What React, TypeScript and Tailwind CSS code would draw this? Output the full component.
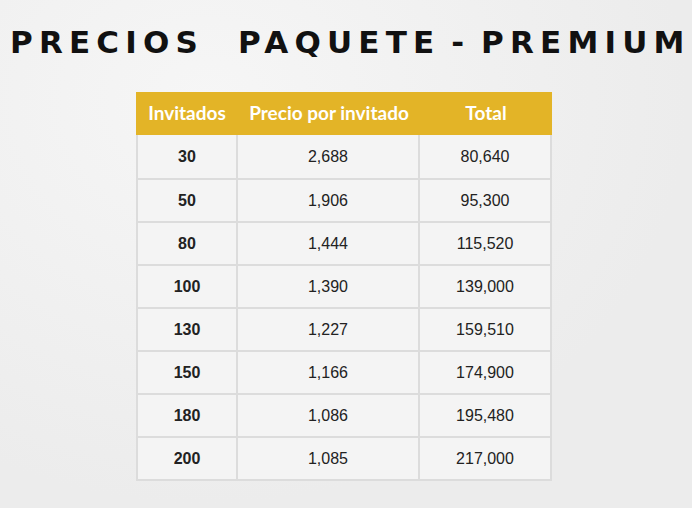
const rows = [
  ["30", "2,688", "80,640"],
  ["50", "1,906", "95,300"],
  ["80", "1,444", "115,520"],
  ["100", "1,390", "139,000"],
  ["130", "1,227", "159,510"],
  ["150", "1,166", "174,900"],
  ["180", "1,086", "195,480"],
  ["200", "1,085", "217,000"],
];

export default function App() {
  return (
    <div className="h-[508px] w-[692px] overflow-hidden bg-[#efefef] bg-[radial-gradient(ellipse_at_30%_20%,#f6f6f6,#ececec_70%)]">
      <h1 className="whitespace-nowrap pl-[10px] pt-[22px] font-['DejaVu_Sans',sans-serif] text-[31px] font-bold leading-[40px] tracking-[0.2em] text-[#111]">
        PRECIOS&nbsp; PAQUETE<span className="tracking-normal"> </span>-<span className="tracking-normal"> </span>PREMIUM
      </h1>
      <div className="ml-[136px] mt-[30px] w-[416px]">
        <div className="grid h-[43px] grid-cols-[102px_182px_132px] items-center bg-[#e3b427] font-['Lato','Open_Sans',sans-serif] text-[19px] font-bold text-white">
          <div className="text-center">Invitados</div>
          <div className="text-center">Precio por invitado</div>
          <div className="text-center">Total</div>
        </div>
        <div className="border-x-2 border-b-2 border-[#dcdcdc] bg-[#f4f4f4] font-['Liberation_Sans',Arial,sans-serif] text-[16px] text-[#222]">
          {rows.map((r, i) => (
            <div
              key={r[0]}
              className={`grid h-[43px] grid-cols-[100px_182px_130px] items-center ${i > 0 ? "border-t-2 border-[#dcdcdc]" : ""}`}
            >
              <div className="flex h-full items-center justify-center border-r-2 border-[#dcdcdc] font-bold">{r[0]}</div>
              <div className="flex h-full items-center justify-center border-r-2 border-[#dcdcdc]">{r[1]}</div>
              <div className="text-center">{r[2]}</div>
            </div>
          ))}
        </div>
      </div>
    </div>
  );
}
